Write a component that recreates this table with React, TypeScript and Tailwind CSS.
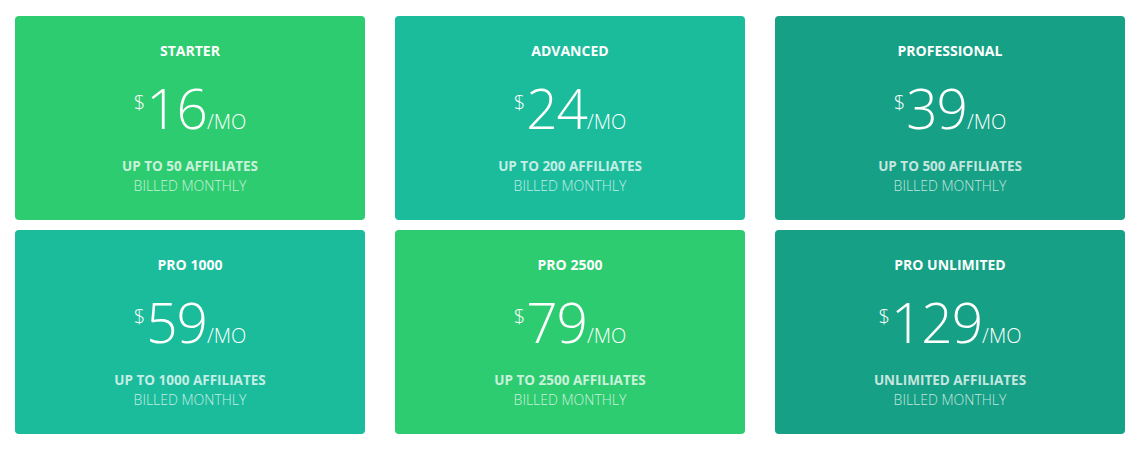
import React from "react";

const plans = [
  { name: "STARTER", price: "16", aff: "UP TO 50 AFFILIATES", bg: "bg-[#2ecc71]" },
  { name: "ADVANCED", price: "24", aff: "UP TO 200 AFFILIATES", bg: "bg-[#1abc9c]" },
  { name: "PROFESSIONAL", price: "39", aff: "UP TO 500 AFFILIATES", bg: "bg-[#16a085]" },
  { name: "PRO 1000", price: "59", aff: "UP TO 1000 AFFILIATES", bg: "bg-[#1abc9c]" },
  { name: "PRO 2500", price: "79", aff: "UP TO 2500 AFFILIATES", bg: "bg-[#2ecc71]" },
  { name: "PRO UNLIMITED", price: "129", aff: "UNLIMITED AFFILIATES", bg: "bg-[#16a085]" },
];

export default function App() {
  return (
    <div
      className="bg-white w-[1141px] h-[450px] pt-[16px] pl-[15px]"
      style={{ fontFamily: '"Open Sans", sans-serif' }}
    >
      <div className="grid grid-cols-[350px_350px_350px] gap-x-[30px] gap-y-[10px]">
        {plans.map((p) => (
          <div
            key={p.name}
            className={`${p.bg} h-[204px] rounded-[4px] text-white flex flex-col items-center pt-[26px]`}
          >
            <div className="text-[14px] font-bold leading-[18px]">{p.name}</div>
            <div className="flex items-baseline mt-[20px] h-[59px] leading-none">
              <span className="text-[20px] font-light self-start mt-[13px] mr-[1px]">$</span>
              <span className="text-[55px] font-light tracking-[-1px]">{p.price}</span>
              <span className="text-[20px] font-light">/MO</span>
            </div>
            <div className="text-[13.5px] font-bold leading-[19px] mt-[18px] text-white/75">{p.aff}</div>
            <div className="text-[14px] font-light leading-[19px] text-white/75">BILLED MONTHLY</div>
          </div>
        ))}
      </div>
    </div>
  );
}
